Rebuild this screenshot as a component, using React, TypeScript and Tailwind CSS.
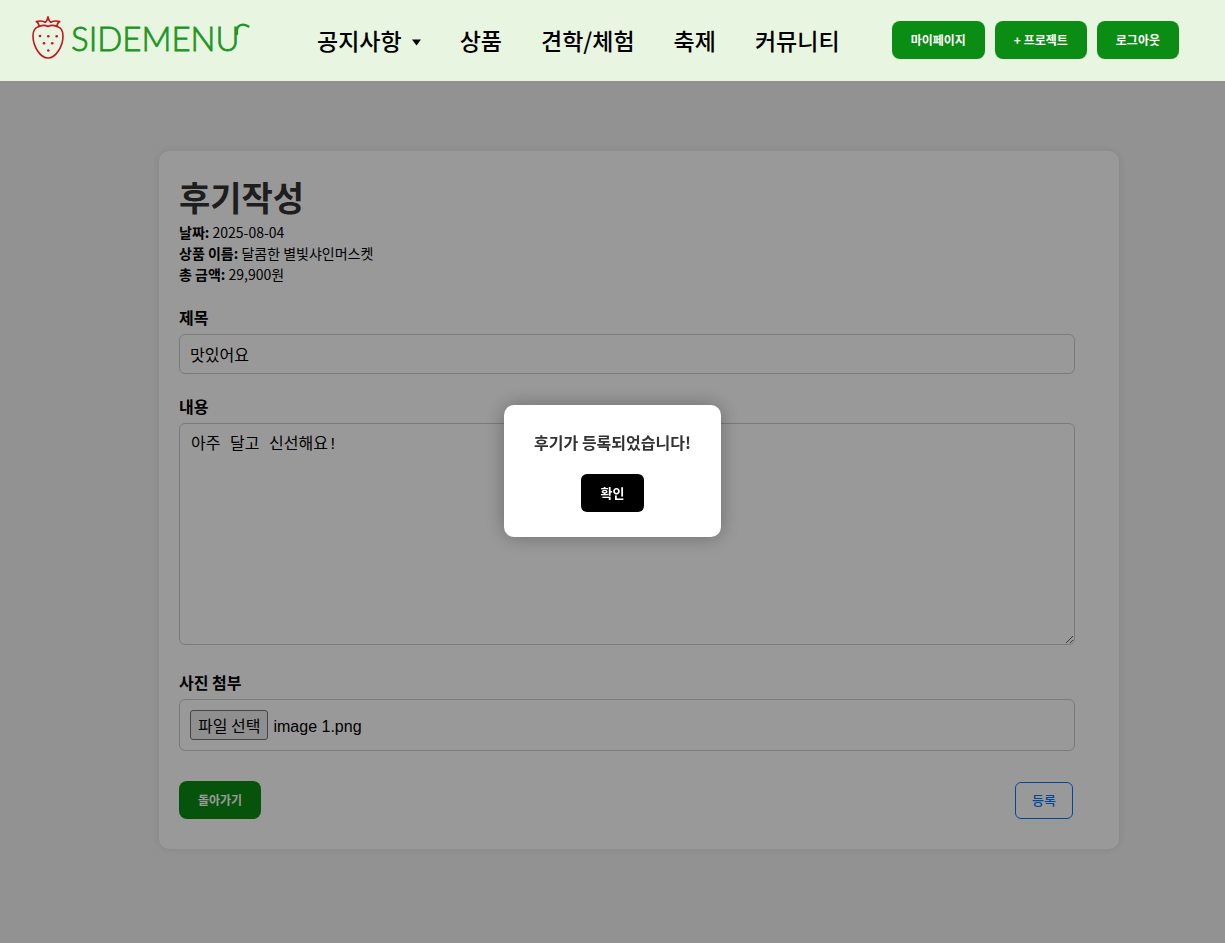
import React, { useState } from 'react';

const navItems = [
  { label: '공지사항', hasMenu: true },
  { label: '상품' },
  { label: '견학/체험' },
  { label: '축제' },
  { label: '커뮤니티' },
];

const headerButtons = ['마이페이지', '+ 프로젝트', '로그아웃'];

const Logo: React.FC = () => (
  <a href="#" aria-label="SIDEMENU" className="shrink-0">
    <svg width="220" height="48" viewBox="0 0 220 48" fill="none">
      {/* Strawberry */}
      <g stroke="#c4161c" strokeWidth="1.6" strokeLinecap="round" strokeLinejoin="round">
        <path d="M9 10.500C5 11.500 3 15 3 20C3 30 10 42 18 42C26 42 33 30 33 20C33 15 31 11.500 27 10.500" />
        <path d="M6.300 5.500C9 4.800 12.500 5 15.300 6.300C16.800 5 17.600 3 18 0.800C18.400 3 19.200 5 20.700 6.300C23.500 5 27 4.800 29.700 5.500C28 6.500 27 8.200 27 10.500C23.500 9 20.500 9 18 10.500C15.500 9 12.500 9 9 10.500C9 8.200 8 6.500 6.300 5.500Z" />
      </g>
      <g fill="#c4161c">
        <circle cx="10" cy="20" r="1.300" />
        <circle cx="18.300" cy="20.300" r="1.300" />
        <circle cx="26.700" cy="20.300" r="1.300" />
        <circle cx="14" cy="27.300" r="1.300" />
        <circle cx="22.200" cy="27.300" r="1.300" />
        <circle cx="18.300" cy="34.500" r="1.300" />
      </g>
      <text
        x="41"
        y="35"
        fill="#1c9622"
        stroke="#1c9622"
        strokeWidth="0.8"
        fontSize="33"
        className="font-['Lato',sans-serif] font-light"
      >
        SIDEMENU
      </text>
      {/* Tail of the wordmark */}
      <path d="M207 18V15C207 9.500 212 6.500 218.500 10.500" stroke="#1c9622" strokeWidth="2.200" strokeLinecap="round" />
    </svg>
  </a>
);

const Header: React.FC = () => (
  <header className="relative z-20 flex h-[81px] items-center bg-[#e8f5e1] pb-px pl-[30px] pr-[46px]">
    <Logo />
    <nav className="ml-[67px] flex items-center gap-[39px] text-[23px] font-medium text-black">
      {navItems.map((item) => (
        <a key={item.label} href="#" className="flex items-center gap-[10px] whitespace-nowrap">
          {item.label}
          {item.hasMenu && (
            <svg width="9" height="7" viewBox="0 0 9 7" fill="currentColor" className="mt-1">
              <path d="M0 0.500h9L4.500 6.500z" />
            </svg>
          )}
        </a>
      ))}
    </nav>
    <div className="ml-auto flex gap-[10px]">
      {headerButtons.map((label) => (
        <button
          key={label}
          type="button"
          className="h-[38px] whitespace-nowrap rounded-lg bg-[#0b8c13] px-[19px] text-[12px] font-bold text-white"
        >
          {label}
        </button>
      ))}
    </div>
  </header>
);

const ReviewForm: React.FC = () => {
  const [title, setTitle] = useState('맛있어요');
  const [content, setContent] = useState('아주 달고 신선해요!');
  const [fileName, setFileName] = useState('image 1.png');

  return (
    <form
      onSubmit={(e) => e.preventDefault()}
      className="w-full max-w-[960px] rounded-[10px] bg-white pb-[30px] pl-5 pr-11 pt-5 shadow-[0_0_10px_rgba(0,0,0,0.1)]"
    >
      <h1 className="text-[34px] font-bold leading-[51px] text-[#333333]">후기작성</h1>
      <div className="text-[14px] leading-[21px]">
        <p><strong>날짜:</strong> 2025-08-04</p>
        <p><strong>상품 이름:</strong> 달콤한 별빛샤인머스켓</p>
        <p><strong>총 금액:</strong> 29,900원</p>
      </div>

      <label htmlFor="title" className="mb-[5px] mt-5 block text-base font-bold">제목</label>
      <input
        id="title"
        type="text"
        value={title}
        onChange={(e) => setTitle(e.target.value)}
        className="block h-10 w-full rounded-md border border-[#cccccc] px-[10px] text-base"
      />

      <label htmlFor="content" className="mb-[5px] mt-5 block text-base font-bold">내용</label>
      <textarea
        id="content"
        value={content}
        onChange={(e) => setContent(e.target.value)}
        className="block h-[222px] w-full resize-y rounded-md border border-[#cccccc] px-[11px] py-[9px] font-['Liberation_Mono','Noto_Sans_CJK_KR',monospace] text-base"
      />

      <label htmlFor="photo" className="mb-[5px] mt-[25px] block text-base font-bold">사진 첨부</label>
      <div className="flex h-[52px] items-center rounded-md border border-[#cccccc] px-[10px]">
        <input
          id="photo"
          type="file"
          accept="image/*"
          onChange={(e) => setFileName(e.target.files?.[0]?.name ?? '')}
          className="sr-only"
        />
        <div className="flex items-baseline gap-[5px]">
          <label
            htmlFor="photo"
            className="flex h-[30px] items-center rounded-[3px] border border-[#767676] bg-[#efefef] px-[7px] text-base"
          >
            파일 선택
          </label>
          <span className="font-['Liberation_Sans',sans-serif] text-base">{fileName}</span>
        </div>
      </div>

      <div className="mt-[30px] flex items-center justify-between pr-[2px]">
        <button type="button" className="h-[38px] rounded-lg bg-[#0b8c13] px-[19px] text-[12px] font-bold text-white">
          돌아가기
        </button>
        <button
          type="submit"
          className="h-[37px] rounded-md border border-[#007bff] bg-white px-4 text-[13px] font-medium text-[#007bff]"
        >
          등록
        </button>
      </div>
    </form>
  );
};

const ConfirmModal: React.FC<{ onClose: () => void }> = ({ onClose }) => (
  <div className="fixed inset-0 z-10 flex items-center justify-center bg-black/40 pb-px">
    <div
      role="dialog"
      aria-modal="true"
      className="flex flex-col items-center gap-5 rounded-[10px] bg-white px-[30px] py-[25px] shadow-[0_0_20px_rgba(0,0,0,0.3)]"
    >
      <p className="text-base font-bold text-[#333333]">후기가 등록되었습니다!</p>
      <button
        type="button"
        onClick={onClose}
        className="h-[38px] rounded-md bg-black px-5 text-[13px] font-bold text-white"
      >
        확인
      </button>
    </div>
  </div>
);

export default function App() {
  const [open, setOpen] = useState(true);

  return (
    <div className="min-h-screen bg-[#f4f4f4] font-['Noto_Sans_CJK_KR',sans-serif] text-black">
      <Header />
      <main className="flex justify-center pb-[70px] pl-[53px] pt-[70px]">
        <ReviewForm />
      </main>
      {open && <ConfirmModal onClose={() => setOpen(false)} />}
    </div>
  );
}
